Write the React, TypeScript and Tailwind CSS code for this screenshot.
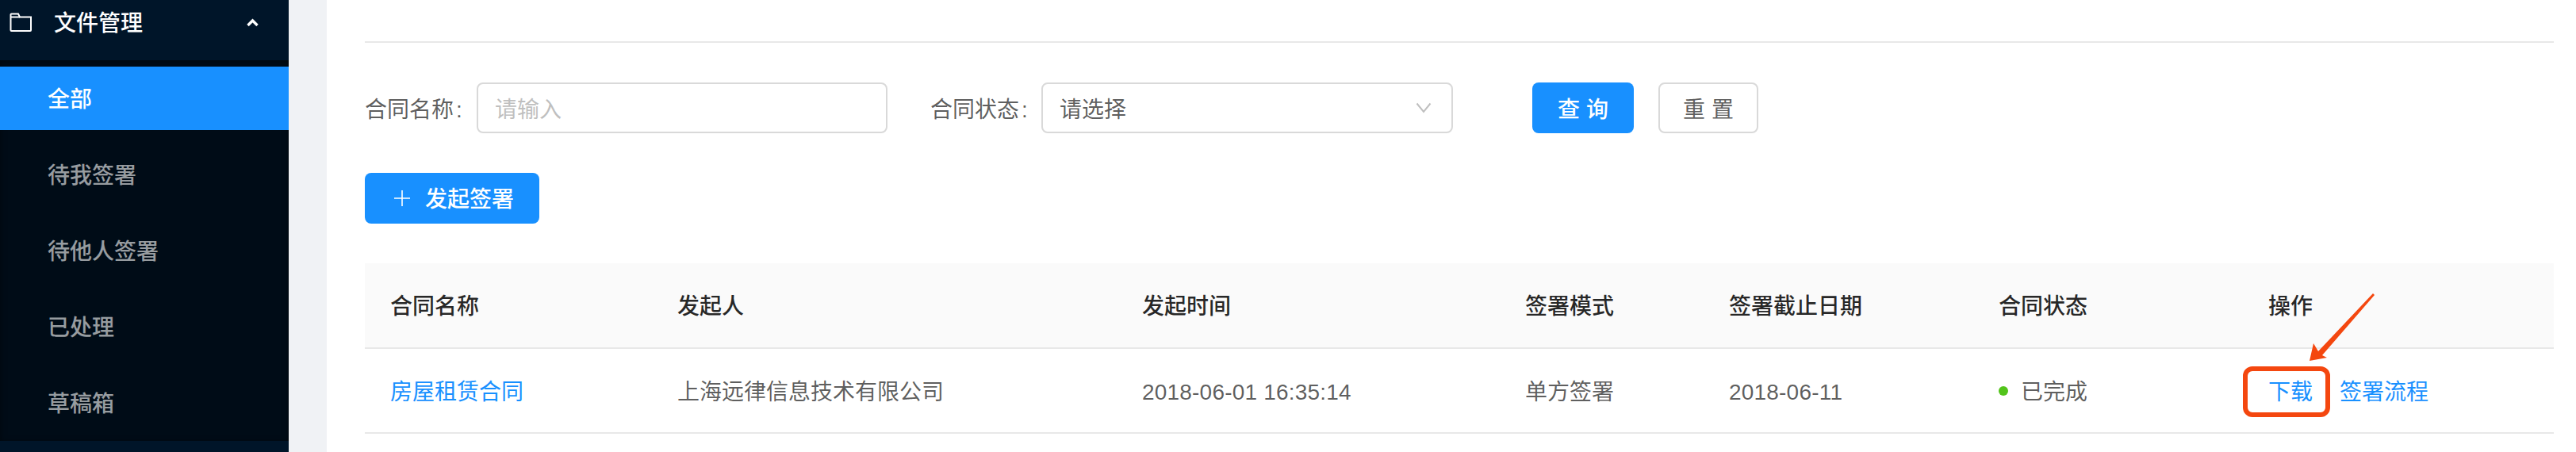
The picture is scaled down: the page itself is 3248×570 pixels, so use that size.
const font = "font-['Liberation_Sans','Noto_Sans_CJK_SC',sans-serif]";

function Cell({ children, className = "" }: { children: React.ReactNode; className?: string }) {
  return <td className={`pl-8 pt-1 text-left ${className}`}>{children}</td>;
}

function Head({ children, className = "" }: { children: React.ReactNode; className?: string }) {
  return <th className={`pl-8 pt-1 text-left font-medium ${className}`}>{children}</th>;
}

const menu = ["待我签署", "待他人签署", "已处理", "草稿箱"];

export default function App() {
  return (
    <div className={`flex h-[570px] w-[3248px] overflow-hidden bg-[#f0f2f5] text-[28px] ${font}`}>
      <aside className="flex h-full w-[364px] shrink-0 flex-col bg-[#001529]">
        <div className="flex h-[76px] shrink-0 items-start text-white">
          <div className="flex h-[56px] w-full items-center pl-3 pr-[38px]">
            <svg width="28" height="24" viewBox="0 0 28 24" fill="none" stroke="#fff" strokeWidth="2" className="shrink-0">
              <path d="M1.5 3.5 V22 a1 1 0 0 0 1 1 H26 a1 1 0 0 0 1-1 V5.5 H13 L11 1.5 H2.5 a1 1 0 0 0-1 1 Z" />
              <path d="M1.5 5.5 H13" />
            </svg>
            <span className="ml-7 flex-1 pt-1 font-medium">文件管理</span>
            <svg width="15" height="11" viewBox="0 0 15 11" fill="none" stroke="#fff" strokeWidth="3.4">
              <path d="M1.5 9 L7.5 3 L13.5 9" />
            </svg>
          </div>
        </div>
        <div className="flex shrink-0 flex-col gap-4 bg-[#000c17] py-2 font-medium text-[rgba(255,255,255,0.6)] shadow-[inset_0_2px_8px_rgba(0,0,0,0.45)]">
          <div className="flex h-20 items-center bg-[#1890ff] pl-[60px] pt-1 text-white">全部</div>
          {menu.map((m) => (
            <div key={m} className="flex h-20 items-center pl-[60px] pt-1">{m}</div>
          ))}
        </div>
      </aside>

      <div className="w-12 shrink-0" />

      <main className="flex-1 bg-white pl-12 pr-7 text-[rgba(0,0,0,0.65)]">
        <div className="mt-[52px] h-0.5 bg-[#e8e8e8]" />

        <div className="mt-[50px] flex items-center">
          <label className="w-[141px] shrink-0 pt-1.5">合同名称<span className="ml-[3px]">:</span></label>
          <div className="flex h-16 w-[518px] items-center rounded-lg border-2 border-[#d9d9d9] pl-[21px] pt-1.5 text-[#bfbfbf]">请输入</div>
          <label className="ml-[54px] w-[140px] shrink-0 pt-1.5">合同状态<span className="ml-[3px]">:</span></label>
          <div className="flex h-16 w-[519px] items-center justify-between rounded-lg border-2 border-[#d9d9d9] pl-[21px] pr-[25px]">
            <span className="pt-1.5">请选择</span>
            <svg width="20" height="14" viewBox="0 0 20 14" fill="none" stroke="#bfbfbf" strokeWidth="2">
              <path d="M1.5 1.5 L10 12 L18.5 1.5" />
            </svg>
          </div>
          <button className="ml-[100px] flex h-16 w-32 items-center justify-center rounded-lg bg-[#1890ff] pt-1.5 font-medium text-white">查 询</button>
          <button className="ml-[31px] flex h-16 w-[126px] items-center justify-center rounded-lg border-2 border-[#d9d9d9] pt-1.5">重 置</button>
        </div>

        <button className="mt-[50px] flex h-16 w-[220px] items-center rounded-lg bg-[#1890ff] pl-9 text-white">
          <svg width="22" height="22" viewBox="0 0 22 22" fill="none" stroke="#fff" strokeWidth="1.6" className="shrink-0">
            <path d="M11 1 V21 M1 11 H21" />
          </svg>
          <span className="ml-[18px] pt-1 font-medium">发起签署</span>
        </button>

        <table className="mt-[50px] w-full table-fixed border-collapse">
          <thead>
            <tr className="h-[107px] border-b-2 border-[#e8e8e8] bg-[#fafafa] text-[rgba(0,0,0,0.85)]">
              <Head className="w-[362px]">合同名称</Head>
              <Head className="w-[586px]">发起人</Head>
              <Head className="w-[483px]">发起时间</Head>
              <Head className="w-[257px]">签署模式</Head>
              <Head className="w-[340px]">签署截止日期</Head>
              <Head className="w-[340px]">合同状态</Head>
              <Head>操作</Head>
            </tr>
          </thead>
          <tbody>
            <tr className="h-[107px] border-b-2 border-[#e8e8e8]">
              <Cell className="text-[#1890ff]">房屋租赁合同</Cell>
              <Cell>上海远律信息技术有限公司</Cell>
              <Cell className="tracking-[0.2px]">2018-06-01 16:35:14</Cell>
              <Cell>单方签署</Cell>
              <Cell className="tracking-[0.2px]">2018-06-11</Cell>
              <Cell>
                <span className="flex items-center">
                  <span className="-mt-1 h-3 w-3 rounded-full bg-[#52c41a]" />
                  <span className="ml-4">已完成</span>
                </span>
              </Cell>
              <td className="relative pl-8 pt-1 text-[#1890ff]">
                <span>下载</span>
                <span className="ml-[34px]">签署流程</span>
                <span className="absolute left-0 top-[22px] h-16 w-[110px] rounded-[12px] border-[6px] border-[#f4470f]" />
                <svg width="90" height="90" viewBox="0 0 90 90" className="absolute left-[77px] top-[-75px]">
                  <path d="M87 5 L89 7 L23 83 L29 86 L7 90 L12 68 L18 78 Z" fill="#f4470f" />
                </svg>
              </td>
            </tr>
          </tbody>
        </table>
      </main>
    </div>
  );
}
